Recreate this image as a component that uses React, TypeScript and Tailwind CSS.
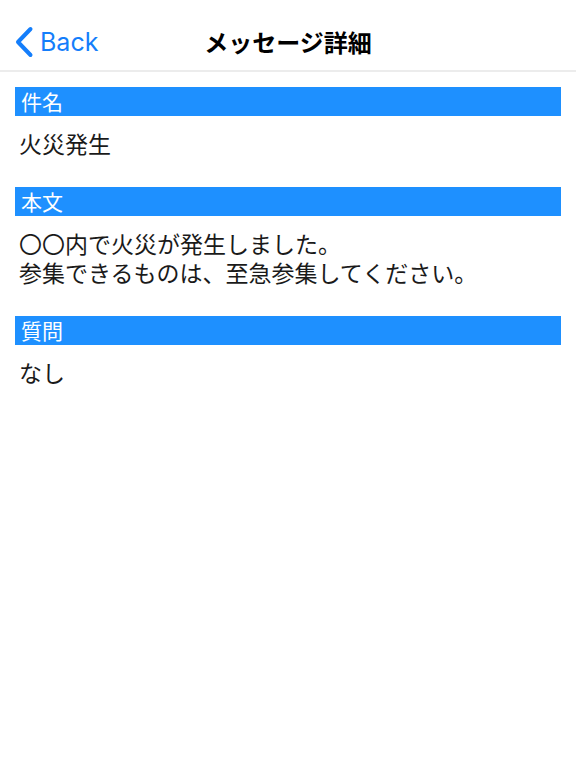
import React from "react";

const sections = [
  { title: "件名", lines: ["火災発生"] },
  {
    title: "本文",
    lines: ["〇〇内で火災が発生しました。", "参集できるものは、至急参集してください。"],
  },
  { title: "質問", lines: ["なし"] },
];

const App = () => {
  return (
    <div className="w-[576px] min-h-[768px] bg-white font-['Noto_Sans_CJK_JP',sans-serif]">
      {/* nav bar */}
      <div className="relative h-[72px] pt-[14px] flex items-center justify-center border-b-2 border-[#ececec]">
        <button className="absolute left-[14px] top-[26px] flex items-center gap-[6px] text-[#147efb]">
          <svg width="20" height="32" viewBox="0 0 20 32" fill="none">
            <path
              d="M16.5 3 L4 16 L16.5 29"
              stroke="#147efb"
              strokeWidth="4"
              strokeLinecap="round"
              strokeLinejoin="round"
            />
          </svg>
          <span className="text-[25px] leading-[30px] font-['Inter',sans-serif]">Back</span>
        </button>
        <h1 className="text-[24px] leading-[30px] font-bold text-black">メッセージ詳細</h1>
      </div>

      {/* content */}
      <div className="px-[15px] pt-[15px]">
        {sections.map((s) => (
          <div key={s.title} className="mb-[29px]">
            <div className="h-[29px] bg-[#1e90ff] px-[6px] flex items-center text-white text-[21px] leading-none">
              {s.title}
            </div>
            <div className="pt-[13px] px-[4px] text-[23px] leading-[29px] text-[#1a1a1a]">
              {s.lines.map((l) => (
                <p key={l}>{l}</p>
              ))}
            </div>
          </div>
        ))}
      </div>
    </div>
  );
};

export default App;
